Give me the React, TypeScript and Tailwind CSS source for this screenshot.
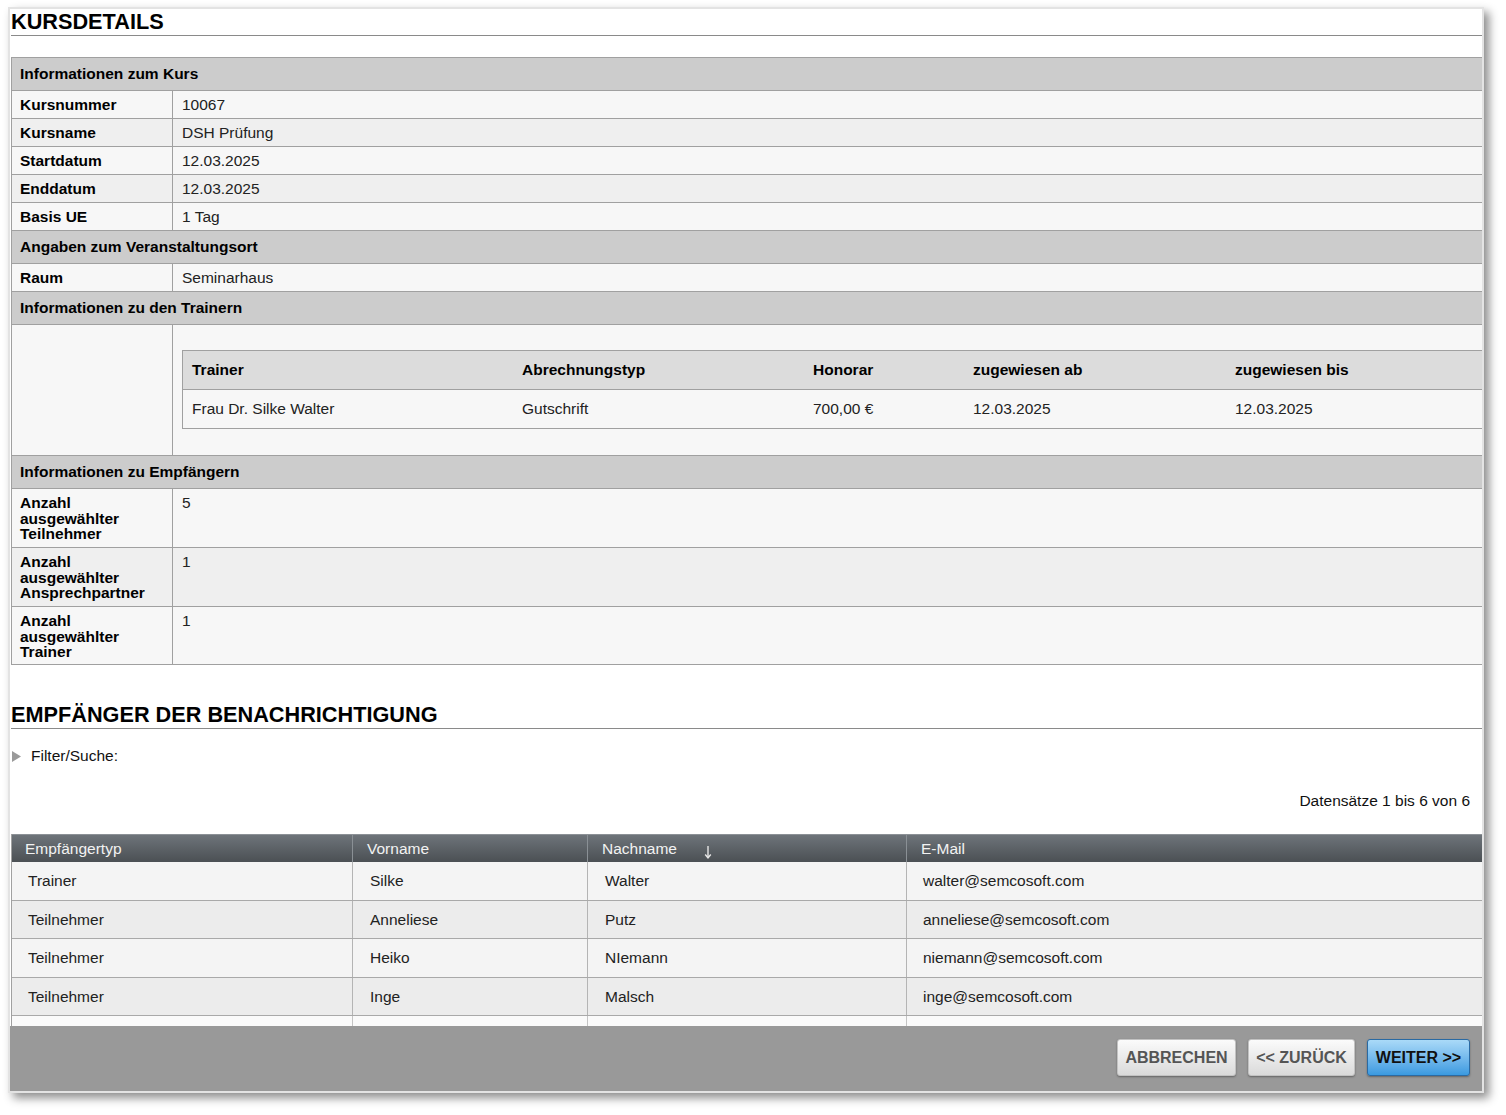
import React from "react";

type Row = { label: string; value: string };

const kursRows: Row[] = [
  { label: "Kursnummer", value: "10067" },
  { label: "Kursname", value: "DSH Prüfung" },
  { label: "Startdatum", value: "12.03.2025" },
  { label: "Enddatum", value: "12.03.2025" },
  { label: "Basis UE", value: "1 Tag" },
];

const anzahlRows = [
  { lines: ["Anzahl", "ausgewählter", "Teilnehmer"], value: "5", h: "h-[59px]" },
  { lines: ["Anzahl", "ausgewählter", "Ansprechpartner"], value: "1", h: "h-[59px]" },
  { lines: ["Anzahl", "ausgewählter", "Trainer"], value: "1", h: "h-[58px]" },
];

const empfaenger = [
  { typ: "Trainer", vorname: "Silke", nachname: "Walter", mail: "walter@semcosoft.com" },
  { typ: "Teilnehmer", vorname: "Anneliese", nachname: "Putz", mail: "anneliese@semcosoft.com" },
  { typ: "Teilnehmer", vorname: "Heiko", nachname: "NIemann", mail: "niemann@semcosoft.com" },
  { typ: "Teilnehmer", vorname: "Inge", nachname: "Malsch", mail: "inge@semcosoft.com" },
];

function SectionHeader({ title }: { title: string }) {
  return (
    <div className="flex h-[33px] items-center border-b border-[#a0a0a0] bg-[#cccccc] pl-[8px] font-bold text-black">
      {title}
    </div>
  );
}

function InfoRow({ label, value, dark }: { label: string; value: string; dark?: boolean }) {
  return (
    <div className={`flex h-[28px] border-b border-[#a0a0a0] ${dark ? "bg-[#efefef]" : "bg-[#f7f7f7]"}`}>
      <div className="flex w-[161px] shrink-0 items-center border-r border-[#a0a0a0] pl-[8px] font-bold text-black">
        {label}
      </div>
      <div className="flex items-center pl-[9px] text-[#222]">{value}</div>
    </div>
  );
}

function TrainerTable() {
  return (
    <div className="border-l border-t border-[#a0a0a0]">
      <div className="flex h-[39px] items-center border-b border-[#a0a0a0] bg-[#dcdcdc] font-bold text-black">
        <div className="w-[330px] pl-[9px]">Trainer</div>
        <div className="w-[291px] pl-[9px]">Abrechnungstyp</div>
        <div className="w-[160px] pl-[9px]">Honorar</div>
        <div className="w-[262px] pl-[9px]">zugewiesen ab</div>
        <div className="flex-1 pl-[9px]">zugewiesen bis</div>
      </div>
      <div className="flex h-[39px] items-center border-b border-[#a0a0a0] bg-[#f7f7f7] text-[#222]">
        <div className="w-[330px] pl-[9px]">Frau Dr. Silke Walter</div>
        <div className="w-[291px] pl-[9px]">Gutschrift</div>
        <div className="w-[160px] pl-[9px]">700,00 €</div>
        <div className="w-[262px] pl-[9px]">12.03.2025</div>
        <div className="flex-1 pl-[9px]">12.03.2025</div>
      </div>
    </div>
  );
}

function Button({ label, primary, w }: { label: string; primary?: boolean; w: string }) {
  return (
    <button
      className={`flex h-[37px] ${w} items-center justify-center rounded-[3px] border text-[16px] font-bold shadow-[0_1px_2px_rgba(0,0,0,0.35)] ${
        primary
          ? "border-[#2a6aa3] bg-linear-to-b from-[#aadaf8] to-[#3a9ae0] text-[#111]"
          : "border-[#c2c2c2] bg-linear-to-b from-[#fbfbfb] to-[#dadada] text-[#555]"
      }`}
    >
      {label}
    </button>
  );
}

export default function App() {
  return (
    <div className="min-h-[1115px] bg-white pl-[8px] pt-[7px] font-['Liberation_Sans',Arial,sans-serif] text-[15.5px] text-[#222]">
      <div className="flex h-[1086px] w-[1476px] flex-col border-2 border-[#e3e3e3] bg-white shadow-[5px_5px_9px_rgba(0,0,0,0.45)]">
        {/* scrollable content */}
        <div className="h-[1017px] shrink-0 overflow-hidden pl-[1px]">
          <h1 className="h-[27px] border-b border-[#8a8a8a] text-[21.7px] leading-[26px] font-bold text-black">
            KURSDETAILS
          </h1>

          <div className="mt-[21px] border-l border-t border-[#a0a0a0]">
            <SectionHeader title="Informationen zum Kurs" />
            {kursRows.map((r, i) => (
              <InfoRow key={r.label} label={r.label} value={r.value} dark={i % 2 === 1} />
            ))}
            <SectionHeader title="Angaben zum Veranstaltungsort" />
            <InfoRow label="Raum" value="Seminarhaus" />
            <SectionHeader title="Informationen zu den Trainern" />
            <div className="flex h-[131px] border-b border-[#a0a0a0] bg-[#f7f7f7]">
              <div className="w-[161px] shrink-0 border-r border-[#a0a0a0]" />
              <div className="flex-1 pb-[26px] pl-[9px] pt-[25px]">
                <TrainerTable />
              </div>
            </div>
            <SectionHeader title="Informationen zu Empfängern" />
            {anzahlRows.map((r, i) => (
              <div
                key={r.lines[2]}
                className={`flex ${r.h} border-b border-[#a0a0a0] ${i % 2 === 1 ? "bg-[#efefef]" : "bg-[#f7f7f7]"}`}
              >
                <div className="w-[161px] shrink-0 border-r border-[#a0a0a0] pl-[8px] pt-[6px] leading-[15.5px] font-bold text-black">
                  {r.lines.map((l) => (
                    <div key={l}>{l}</div>
                  ))}
                </div>
                <div className="pl-[9px] pt-[6px] leading-[15.5px] text-[#222]">{r.value}</div>
              </div>
            ))}
          </div>

          <h2 className="mt-[36px] h-[28px] border-b border-[#8a8a8a] text-[21.7px] leading-[27px] font-bold text-black">
            EMPFÄNGER DER BENACHRICHTIGUNG
          </h2>

          <div className="mt-[17px] flex h-[20px] items-center">
            <svg width="10" height="11" viewBox="0 0 10 11" className="ml-[1px] mr-[9px]">
              <polygon points="0,0 9,5.5 0,11" fill="#9a9a9a" />
            </svg>
            <span className="text-[#111]">Filter/Suche:</span>
          </div>

          <div className="mt-[25px] flex h-[20px] items-center justify-end pr-[12px] text-[#111]">
            Datensätze 1 bis 6 von 6
          </div>

          <div className="mt-[23px] border-l border-[#a0a0a0]">
            <div className="flex h-[28px] items-center border-t border-[#8c9196] bg-linear-to-b from-[#6e747a] to-[#4b5054] text-[#f2f2f2]">
              <div className="flex h-full w-[341px] items-center border-r border-[#8a9095] pl-[13px]">Empfängertyp</div>
              <div className="flex h-full w-[235px] items-center border-r border-[#8a9095] pl-[14px]">Vorname</div>
              <div className="flex h-full w-[319px] items-center border-r border-[#8a9095] pl-[14px]">
                Nachname
                <svg width="8" height="14" viewBox="0 0 8 14" className="ml-[27px] mt-[6px]">
                  <path d="M4 1 V12.5" stroke="#e6e6e6" strokeWidth="1.4" />
                  <path d="M1.2 9.5 L4 12.8 L6.8 9.5" stroke="#e6e6e6" strokeWidth="1.4" fill="none" />
                </svg>
              </div>
              <div className="flex h-full flex-1 items-center pl-[14px]">E-Mail</div>
            </div>
            {empfaenger.map((r, i) => (
              <div
                key={r.mail}
                className={`flex h-[38.5px] border-b border-[#a9a9a9] ${i % 2 === 1 ? "bg-[#ececec]" : "bg-[#f4f4f4]"} text-[#222]`}
              >
                <div className="flex w-[341px] items-center border-r border-[#b4b4b4] pl-[16px]">{r.typ}</div>
                <div className="flex w-[235px] items-center border-r border-[#b4b4b4] pl-[17px]">{r.vorname}</div>
                <div className="flex w-[319px] items-center border-r border-[#b4b4b4] pl-[17px]">{r.nachname}</div>
                <div className="flex flex-1 items-center pl-[16px]">{r.mail}</div>
              </div>
            ))}
            <div className="flex h-[38.5px] bg-[#fafafa]">
              <div className="w-[341px] border-r border-[#c4c4c4]" />
              <div className="w-[235px] border-r border-[#c4c4c4]" />
              <div className="w-[319px] border-r border-[#c4c4c4]" />
              <div className="flex-1" />
            </div>
          </div>
        </div>

        {/* footer */}
        <div className="flex flex-1 items-start justify-end gap-[12px] bg-[#999999] pr-[12px] pt-[13px]">
          <Button label="ABBRECHEN" w="w-[119px]" />
          <Button label="<< ZURÜCK" w="w-[107px]" />
          <Button label="WEITER >>" primary w="w-[103px]" />
        </div>
      </div>
    </div>
  );
}
